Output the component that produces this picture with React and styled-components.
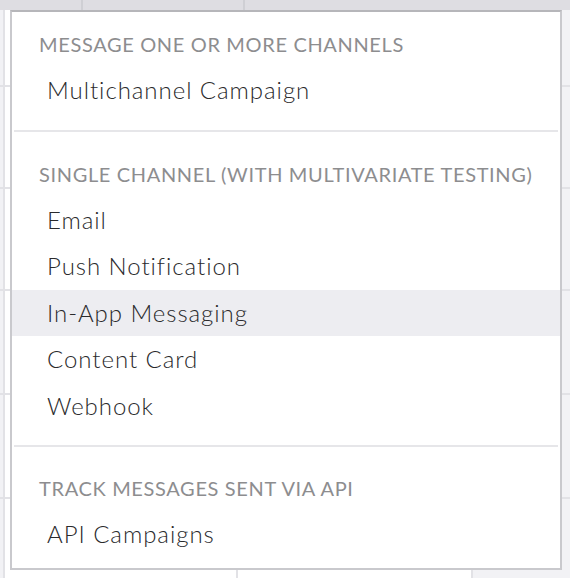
import React from "react";
import styled, { createGlobalStyle } from "styled-components";

const Global = createGlobalStyle`
  html, body { margin: 0; padding: 0; background: #ffffff; }
  body { font-family: Lato, "Noto Sans", sans-serif; }
  #root { width: 570px; height: 578px; overflow: hidden; }
`;

const Page = styled.div`
  position: relative;
  width: 570px;
  height: 578px;
  display: flex;
  flex-direction: column;
  background: #ffffff;
`;

const HeaderRow = styled.div`
  height: 10px;
  flex: none;
  display: grid;
  grid-template-columns: 83px 162px 1fr;
  background: #dedde2;
`;

const HeaderCell = styled.div`
  border-right: 2px solid #cfcfd4;
  &:last-child { border-right: none; }
`;

const Body = styled.div`
  flex: 1;
  display: flex;
  flex-direction: column;
`;

const BodyRow = styled.div`
  height: ${(p) => p.$h}px;
  flex: none;
  display: grid;
  grid-template-columns: 5px 233px 235px 1fr;
  border-bottom: 2px solid #e2e2e6;
`;

const BodyCell = styled.div`
  border-right: 2px solid #e2e2e6;
  background: ${(p) => (p.$shade ? "#f2f2f5" : "transparent")};
  &:last-child { border-right: none; }
`;

const Menu = styled.div`
  position: absolute;
  left: 10px;
  top: 10px;
  width: 552px;
  height: 560px;
  box-sizing: border-box;
  background: #ffffff;
  border: 2px solid #c9c9cd;
  border-top-color: #b6b6ba;
  display: flex;
  flex-direction: column;
  overflow: hidden;
`;

const Group = styled.div`
  padding-top: ${(p) => (p.$first ? 20 : p.$last ? 29 : 30)}px;
  padding-bottom: ${(p) => (p.$last ? 0 : 16)}px;
  border-bottom: ${(p) => (p.$last ? "none" : "2px solid #e6e6e9")};
  margin: 0 2px;
`;

const GroupTitle = styled.div`
  height: 24px;
  line-height: 24px;
  padding-left: 25px;
  margin-bottom: 11px;
  font-size: 20px;
  font-weight: 400;
  letter-spacing: 0.65px;
  color: #8d8d8f;
  text-transform: uppercase;
  white-space: nowrap;
`;

const Item = styled.div`
  height: 46.5px;
  line-height: 46.5px;
  padding-left: 35px;
  margin: 0 -2px;
  font-size: 24px;
  font-weight: 300;
  letter-spacing: 0.95px;
  color: #2a2a2c;
  white-space: nowrap;
  background: ${(p) => (p.$active ? "#ededf1" : "transparent")};
  cursor: pointer;
`;

const groups = [
  { title: "Message one or more channels", items: ["Multichannel Campaign"] },
  {
    title: "Single channel (with multivariate testing)",
    items: ["Email", "Push Notification", "In-App Messaging", "Content Card", "Webhook"],
  },
  { title: "Track messages sent via API", items: ["API Campaigns"] },
];

const rows = [75, 100, 100, 102, 102, 102];

export default function App() {
  return (
    <Page>
      <Global />
      <HeaderRow>
        <HeaderCell />
        <HeaderCell />
        <HeaderCell />
      </HeaderRow>
      <Body>
        {rows.map((h, i) => (
          <BodyRow key={i} $h={h}>
            <BodyCell $shade />
            <BodyCell />
            <BodyCell />
            <BodyCell $shade />
          </BodyRow>
        ))}
      </Body>
      <Menu>
        {groups.map((g, gi) => (
          <Group key={gi} $first={gi === 0} $last={gi === groups.length - 1}>
            <GroupTitle>{g.title}</GroupTitle>
            {g.items.map((it) => (
              <Item key={it} $active={it === "In-App Messaging"}>
                {it}
              </Item>
            ))}
          </Group>
        ))}
      </Menu>
    </Page>
  );
}
